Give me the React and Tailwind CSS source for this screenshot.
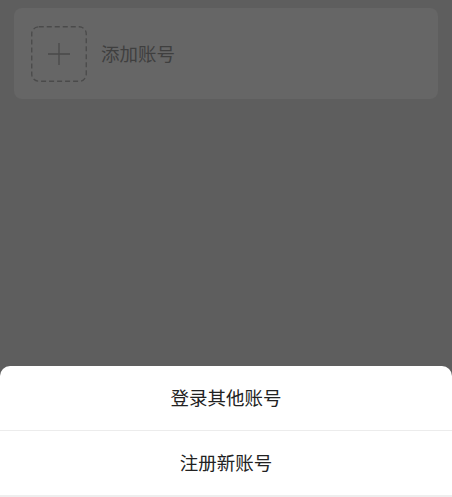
export default function App() {
  return (
    <div
      className="relative h-[497px] w-[452px] overflow-hidden bg-[#5e5e5e]"
      style={{ fontFamily: '"Noto Sans CJK SC", "Noto Sans", sans-serif' }}
    >
      <div className="px-[14px] pt-2">
        <div className="flex h-[91px] items-center rounded-[8px] bg-[#666666] pl-[17px]">
          <div className="relative flex h-[56px] w-[56px] items-center justify-center">
            <svg className="absolute inset-0" width="56" height="56" viewBox="0 0 56 56" fill="none">
              <rect x="0.75" y="0.75" width="54.5" height="54.5" rx="7" stroke="#4a4a4a" strokeWidth="1.3" strokeDasharray="5 3" />
            </svg>
            <svg width="22" height="22" viewBox="0 0 22 22" fill="none" stroke="#4a4a4a" strokeWidth="1.3">
              <path d="M11 0v22M0 11h22" />
            </svg>
          </div>
          <span className="ml-[14px] text-[18.5px] text-[#3f3f3f]">添加账号</span>
        </div>
      </div>

      <div className="absolute bottom-0 left-0 right-0 rounded-t-[10px] bg-white">
        <button className="flex h-[64px] w-full items-center justify-center text-[18.5px] text-[#222]">
          登录其他账号
        </button>
        <div className="h-px bg-[#ececec]" />
        <button className="flex h-[64px] w-full items-center justify-center text-[18.5px] text-[#222]">
          注册新账号
        </button>
        <div className="h-[2px] bg-[#eeeeee]" />
      </div>
    </div>
  );
}
